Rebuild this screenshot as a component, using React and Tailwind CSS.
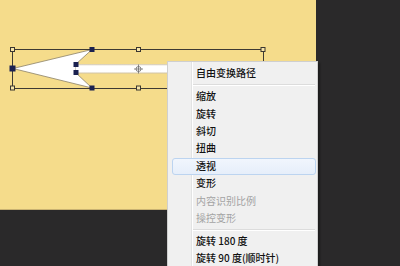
import React from "react";

const font = { fontFamily: '"Noto Sans CJK SC", "Noto Sans", sans-serif' };

function Item({ label, disabled, active }) {
  return (
    <div className="relative h-[17.4px] flex items-center">
      {active && (
        <div className="absolute left-[4px] right-[1px] top-[1px] bottom-[-1px] rounded-[3px] border border-[#bcd4f0] bg-gradient-to-b from-[#f1f6fd] to-[#e6eefa]" />
      )}
      <span
        className={`relative pl-[28px] text-[10px] leading-none ${disabled ? "text-[#a3a3a3]" : "text-[#111111] font-medium"}`}
      >
        {label}
      </span>
    </div>
  );
}

function Sep() {
  return (
    <div className="h-[5.8px] flex flex-col justify-center pl-[25px] pr-[2px]">
      <div className="h-px bg-[#dcdcdc]" />
      <div className="h-px bg-white" />
    </div>
  );
}

function Handle({ x, y, filled, big }) {
  const s = big ? 5 : 4;
  return (
    <rect
      x={x - s / 2}
      y={y - s / 2}
      width={s}
      height={s}
      fill={filled ? "#1b2150" : "#f6e4a6"}
      stroke={filled ? "#1b2150" : "#3a3630"}
      strokeWidth="1"
    />
  );
}

export default function App() {
  return (
    <div className="relative w-[400px] h-[266px] bg-[#2a292a] overflow-hidden" style={font}>
      <div className="w-[316px] h-[210px] bg-[#f5dc8b] border-b border-[#c9b272]" />

      <svg className="absolute left-0 top-0" width="400" height="266" viewBox="0 0 400 266">
        <defs>
          <linearGradient id="shaft" x1="0" y1="0" x2="0" y2="1">
            <stop offset="0" stopColor="#cfc3a6" />
            <stop offset="0.2" stopColor="#ffffff" />
            <stop offset="0.8" stopColor="#ffffff" />
            <stop offset="1" stopColor="#cfc3a6" />
          </linearGradient>
        </defs>
        <polygon
          points="13,68.5 92,49.5 76,64 76,73 92,88 13,68.5"
          fill="#ffffff"
          stroke="#8c8168"
          strokeWidth="0.8"
        />
        <rect x="76" y="64" width="190" height="9.5" fill="url(#shaft)" />
        <rect x="12.5" y="49.5" width="251" height="39" fill="none" stroke="#3e3a33" strokeWidth="1" />
        <circle cx="138.5" cy="69" r="2.5" fill="none" stroke="#6a6a6a" strokeWidth="0.8" />
        <line x1="134" y1="69" x2="143" y2="69" stroke="#6a6a6a" strokeWidth="0.8" />
        <line x1="138.5" y1="64.5" x2="138.5" y2="73.5" stroke="#6a6a6a" strokeWidth="0.8" />
        <Handle x={12.5} y={49.5} />
        <Handle x={12.5} y={68.5} filled big />
        <Handle x={12.5} y={88} />
        <Handle x={92} y={49.5} filled />
        <Handle x={92} y={88} filled />
        <Handle x={76} y={64.5} filled />
        <Handle x={76} y={72.5} filled />
        <Handle x={138.5} y={49.5} />
        <Handle x={138.5} y={88} />
        <Handle x={263} y={49.5} />
      </svg>

      <div className="absolute left-[167px] top-[61px] w-[151px] h-[220px] bg-[#f0f0f0] border border-[#cfcfcf] shadow-[2px_2px_2px_rgba(0,0,0,0.35)] pt-[2.3px]">
        <div className="absolute left-[23px] top-0 bottom-0 w-px bg-[#e2e3e3]" />
        <div className="absolute left-[24px] top-0 bottom-0 w-px bg-white" />
        <Item label="自由变换路径" />
        <Sep />
        <Item label="缩放" />
        <Item label="旋转" />
        <Item label="斜切" />
        <Item label="扭曲" />
        <Item label="透视" active />
        <Item label="变形" />
        <Item label="内容识别比例" disabled />
        <Item label="操控变形" disabled />
        <Sep />
        <Item label="旋转 180 度" />
        <Item label="旋转 90 度(顺时针)" />
      </div>
    </div>
  );
}
